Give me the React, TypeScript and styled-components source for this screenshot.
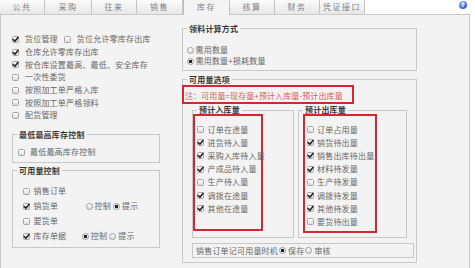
import React from "react";
import styled, { createGlobalStyle } from "styled-components";

const GlobalStyle = createGlobalStyle`
  html, body {
    margin: 0;
    padding: 0;
    background: #ffffff;
  }
  body {
    font-family: "Noto Sans CJK SC", "Liberation Sans", sans-serif;
    font-size: 8px;
    color: #676767;
  }
`;

const tabs = [
  { label: "公共", width: 45 },
  { label: "采购", width: 47 },
  { label: "往来", width: 45 },
  { label: "销售", width: 46 },
  { label: "库存", width: 47, active: true },
  { label: "核算", width: 45 },
  { label: "财务", width: 45 },
  { label: "凭证接口", width: 45 },
];

const inbound = [
  { label: "订单在途量", on: false },
  { label: "进货待入量", on: true },
  { label: "采购入库待入量", on: true },
  { label: "产成品待入量", on: true },
  { label: "生产待入量", on: false },
  { label: "调拨在途量", on: true },
  { label: "其他在途量", on: true },
];

const outbound = [
  { label: "订单占用量", on: false },
  { label: "销货待出量", on: true },
  { label: "销售出库待出量", on: true },
  { label: "材料待发量", on: true },
  { label: "生产待发量", on: false },
  { label: "调拨待发量", on: true },
  { label: "其他待发量", on: true },
  { label: "要货待出量", on: false },
];

function Check({ on }: { on?: boolean }) {
  return (
    <CheckBox>
      {on && (
        <Tick viewBox="0 0 5 5">
          <path d="M0.2 2.5 L1.9 4.3 L5.1 0.2" />
        </Tick>
      )}
    </CheckBox>
  );
}

function RadioOpt({ on, label }: { on?: boolean; label: string }) {
  return (
    <Opt>
      <Radio $on={on} />
      <span>{label}</span>
    </Opt>
  );
}

export default function App() {
  return (
    <Page>
      <GlobalStyle />
      <TabBar>
        {tabs.map((t) => (
          <Tab key={t.label} $width={t.width} $active={t.active}>
            {t.label}
          </Tab>
        ))}
        <Help>?</Help>
      </TabBar>

      <Panel>
        <LeftCol>
          <Row $h={12.7} $gap={6}>
            <Check on />
            <span>货位管理</span>
            <Check />
            <span>货位允许零库存出库</span>
          </Row>
          <Row $h={12.7} $gap={6}>
            <Check on />
            <span>仓库允许零库存出库</span>
          </Row>
          <Row $h={12.7} $gap={6}>
            <Check on />
            <span>按仓库设置最高、最低、安全库存</span>
          </Row>
          <Row $h={12.7} $gap={6}>
            <Check />
            <span>一次性委货</span>
          </Row>
          <Row $h={12.7} $gap={6}>
            <Check />
            <span>按照加工单严格入库</span>
          </Row>
          <Row $h={12.7} $gap={6}>
            <Check />
            <span>按照加工单严格领料</span>
          </Row>
          <Row $h={12.7} $gap={6}>
            <Check />
            <span>配货管理</span>
          </Row>

          <Group $mt={8}>
            <Legend>最低最高库存控制</Legend>
            <Body $pad="6.5px 0 4px 5px">
              <Row $h={12} $gap={5}>
                <Check />
                <span>最低最高库存控制</span>
              </Row>
            </Body>
          </Group>

          <Group $mt={2.5}>
            <Legend>可用量控制</Legend>
            <Body $pad="8px 0 3px 10px">
              <Row $h={15} $gap={3.5}>
                <Check />
                <span>销售订单</span>
              </Row>
              <Row $h={15} $gap={3.5}>
                <Check on />
                <span>销货单</span>
                <RadioSet $ml={24}>
                  <RadioOpt label="控制" />
                  <RadioOpt on label="提示" />
                </RadioSet>
              </Row>
              <Row $h={15} $gap={3.5}>
                <Check />
                <span>要货单</span>
              </Row>
              <Row $h={15} $gap={3.5}>
                <Check on />
                <span>库存单据</span>
                <RadioSet $ml={12}>
                  <RadioOpt on label="控制" />
                  <RadioOpt label="提示" />
                </RadioSet>
              </Row>
            </Body>
          </Group>
        </LeftCol>

        <RightCol>
          <Group>
            <Legend>领料计算方式</Legend>
            <Body $pad="11px 0 3.5px 3.5px">
              <Row $h={11} $gap={0}>
                <RadioOpt label="需用数量" />
              </Row>
              <Row $h={11} $gap={0}>
                <RadioOpt on label="需用数量+损耗数量" />
              </Row>
            </Body>
          </Group>

          <Group $mt={3.5}>
            <Legend>可用量选项</Legend>
            <Body $pad="0 0 4px 0">
              <Note>注：可用量=现存量+预计入库量-预计出库量</Note>

              <SubRow>
                <Group $w={102}>
                  <Legend>预计入库量</Legend>
                  <Body $pad="0 0 6px 0">
                    <Marked $w={70} $h={117} $ml={0}>
                      {inbound.map((it) => (
                        <Row key={it.label} $h={13.2} $gap={3.5}>
                          <Check on={it.on} />
                          <span>{it.label}</span>
                        </Row>
                      ))}
                    </Marked>
                  </Body>
                </Group>
                <Group $w={109}>
                  <Legend>预计出库量</Legend>
                  <Body $pad="0 0 3px 0">
                    <Marked $w={74} $h={119} $ml={4}>
                      {outbound.map((it) => (
                        <Row key={it.label} $h={13.2} $gap={3}>
                          <Check on={it.on} />
                          <span>{it.label}</span>
                        </Row>
                      ))}
                    </Marked>
                  </Body>
                </Group>
              </SubRow>

              <Timing>
                <span>销售订单记可用量时机</span>
                <RadioOpt on label="保存" />
                <RadioOpt label="审核" />
              </Timing>
            </Body>
          </Group>
        </RightCol>
      </Panel>
    </Page>
  );
}

const Page = styled.div`
  width: 475px;
  height: 268px;
  overflow: hidden;
  letter-spacing: 0.2px;
`;

const TabBar = styled.div`
  display: flex;
  height: 14px;
  position: relative;
  z-index: 1;
`;

const Tab = styled.div<{ $width: number; $active?: boolean }>`
  width: ${(p) => p.$width}px;
  height: ${(p) => (p.$active ? 15 : 14)}px;
  box-sizing: border-box;
  display: flex;
  align-items: center;
  justify-content: center;
  padding-bottom: ${(p) => (p.$active ? 1 : 0)}px;
  border-right: 1px solid #c4c4c4;
  border-left: ${(p) => (p.$active ? "1px solid #bdbdbd" : "none")};
  background: ${(p) =>
    p.$active ? "#f4f4f4" : "linear-gradient(#fbfbfb, #e7e7e7)"};
  color: #808080;
  font-size: 8px;
  line-height: 10px;
  letter-spacing: 1.5px;
`;

const Help = styled.span`
  margin-left: auto;
  margin-right: 8px;
  margin-top: 1px;
  width: 8px;
  height: 8px;
  border-radius: 50%;
  background: radial-gradient(circle at 35% 30%, #9cc0ff, #2c5fd4 70%);
  color: #ffffff;
  font-family: "DejaVu Sans", sans-serif;
  font-size: 6px;
  font-weight: bold;
  line-height: 8px;
  text-align: center;
  letter-spacing: 0;
`;

const Panel = styled.div`
  width: 470px;
  height: 260px;
  box-sizing: border-box;
  border: 1px solid #c9c9c9;
  background: #f3f3f3;
  display: flex;
  align-items: flex-start;
`;

const LeftCol = styled.div`
  width: 148px;
  margin-left: 11px;
  padding-top: 18px;
  display: flex;
  flex-direction: column;
`;

const RightCol = styled.div`
  width: 235px;
  margin-left: 22px;
  padding-top: 8.5px;
  display: flex;
  flex-direction: column;
`;

const Row = styled.div<{ $h: number; $gap: number }>`
  display: flex;
  align-items: center;
  height: ${(p) => p.$h}px;
  gap: ${(p) => p.$gap}px;
  white-space: nowrap;
  line-height: 10px;
`;

const Group = styled.fieldset<{ $mt?: number; $w?: number }>`
  margin: ${(p) => p.$mt || 0}px 0 0 0;
  padding: 0;
  min-width: 0;
  ${(p) => (p.$w ? `width: ${p.$w}px;` : "")}
  box-sizing: border-box;
  border: 1px solid #c8c8c8;
  background: #f3f3f3;
`;

const Legend = styled.legend`
  margin-left: 4px;
  padding: 0 2px;
  line-height: 10px;
  font-weight: bold;
  color: #3a3a3a;
  white-space: nowrap;
`;

const Body = styled.div<{ $pad: string }>`
  padding: ${(p) => p.$pad};
  display: flex;
  flex-direction: column;
`;

const CheckBox = styled.span`
  width: 7px;
  height: 7px;
  box-sizing: border-box;
  flex: none;
  border: 1px solid #a4a4a4;
  border-radius: 1.5px;
  background: linear-gradient(#ffffff, #dcdcdc);
  display: inline-flex;
  align-items: center;
  justify-content: center;
`;

const Tick = styled.svg`
  width: 5px;
  height: 5px;
  overflow: visible;
  fill: none;
  stroke: #1c1c1c;
  stroke-width: 1.4;
  stroke-linecap: round;
  stroke-linejoin: round;
`;

const Radio = styled.span<{ $on?: boolean }>`
  width: 7px;
  height: 7px;
  box-sizing: border-box;
  flex: none;
  border-radius: 50%;
  border: 1px solid #9c9c9c;
  background: ${(p) =>
    p.$on
      ? "radial-gradient(circle, #222222 0 1.4px, #f4f4f4 1.9px, #dadada)"
      : "linear-gradient(#ffffff, #dcdcdc)"};
`;

const Opt = styled.span`
  display: inline-flex;
  align-items: center;
  gap: 2px;
`;

const RadioSet = styled.span<{ $ml: number }>`
  display: inline-flex;
  align-items: center;
  gap: 2px;
  margin-left: ${(p) => p.$ml}px;
`;

const Note = styled.div`
  width: 172px;
  height: 19px;
  margin-left: -1px;
  box-sizing: border-box;
  border: 2px solid #d6262e;
  display: flex;
  align-items: flex-end;
  padding: 0 0 1px 1px;
  line-height: 10px;
  color: #e25a54;
  white-space: nowrap;
  letter-spacing: 0.1px;
`;

const SubRow = styled.div`
  display: flex;
  gap: 4px;
  margin: 1.5px 0 0 9px;
`;

const Marked = styled.div<{ $w: number; $h: number; $ml: number }>`
  width: ${(p) => p.$w}px;
  height: ${(p) => p.$h}px;
  margin: -1px 0 0 ${(p) => p.$ml}px;
  box-sizing: border-box;
  border: 2px solid #d6262e;
  padding: 7px 0 0 2px;
  display: flex;
  flex-direction: column;
`;

const Timing = styled.div`
  width: 222px;
  height: 15px;
  margin: 5px 0 0 9px;
  box-sizing: border-box;
  border: 1px solid #c8c8c8;
  display: flex;
  align-items: center;
  gap: 1px;
  padding-left: 3px;
  line-height: 10px;
  white-space: nowrap;
`;
